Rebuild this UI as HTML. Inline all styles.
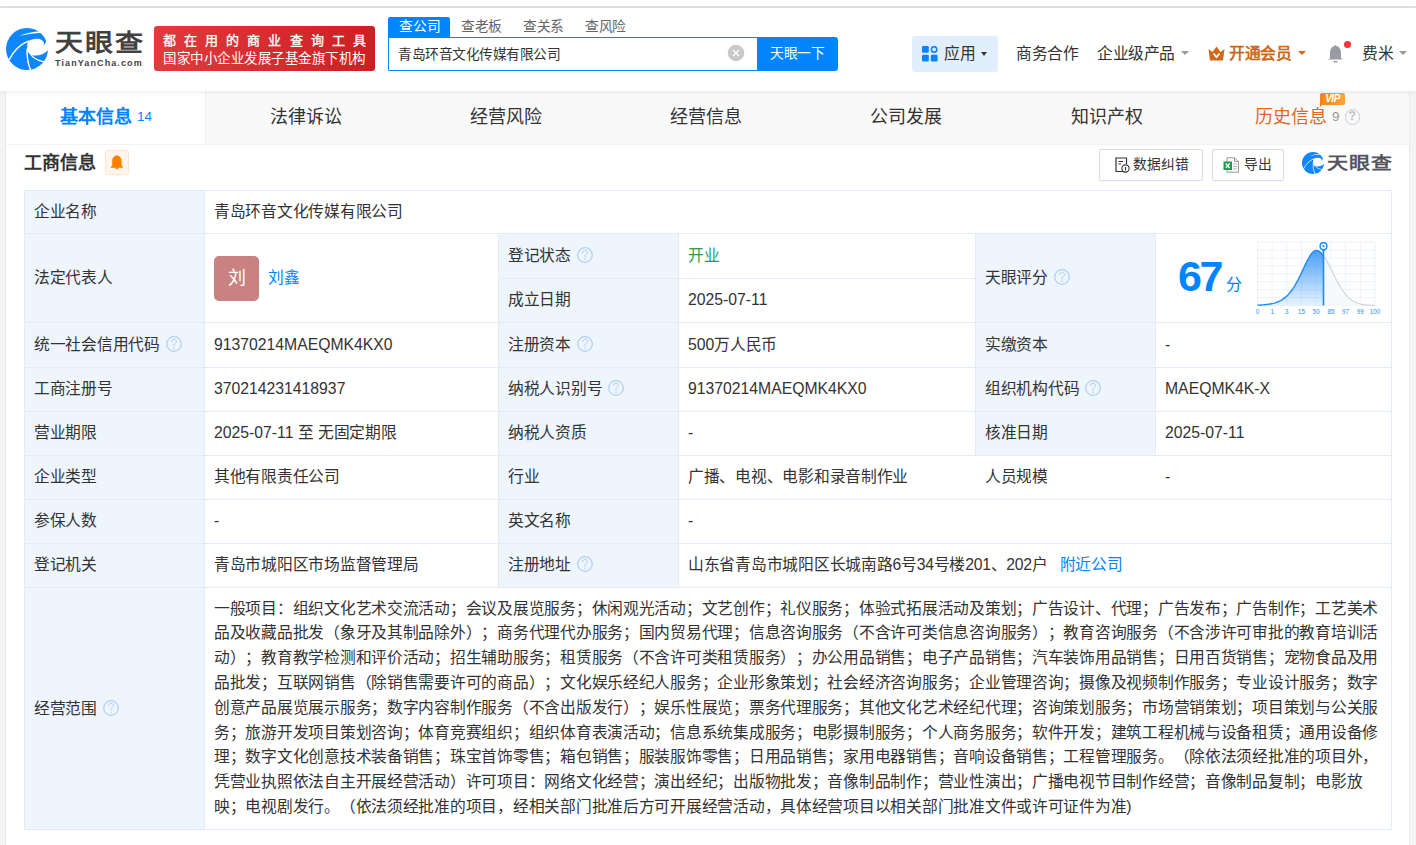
<!DOCTYPE html>
<html lang="zh-CN">
<head>
<meta charset="utf-8">
<style>
html,body{margin:0;padding:0;}
body{text-spacing-trim:space-all;width:1416px;height:845px;overflow:hidden;position:relative;background:#fff;font-family:"Liberation Sans",sans-serif;color:#333;}
.a{position:absolute;}
.t{position:absolute;white-space:nowrap;font-size:15.75px;line-height:20px;color:#333;letter-spacing:-0.27px;text-spacing-trim:space-all;}
.n{letter-spacing:0}
.lbl{position:absolute;background:#eef5fd;}
.hl{position:absolute;height:1px;background:#e3ecf6;}
.vl{position:absolute;width:1px;background:#e3ecf6;}
.q{position:absolute;box-sizing:border-box;width:16px;height:16px;margin-top:-1px;border:1.2px solid #a3c7ec;border-radius:50%;color:#94bfea;font-size:13px;line-height:14px;text-align:center;}
</style>
</head>
<body>
<div class="a" style="left:0;top:6px;width:1416px;height:2px;background:#e2e2e2"></div>
<div class="a" style="left:0;top:91px;width:6px;height:754px;background:#f4f4f4"></div>
<div class="a" style="left:5px;top:91px;width:1px;height:754px;background:#e9e9e9"></div>
<div class="a" style="left:1410px;top:91px;width:6px;height:754px;background:#f4f4f4"></div>
<div class="a" style="left:1409px;top:91px;width:1px;height:754px;background:#ececec"></div>
<div class="a" style="left:6px;top:91px;width:1403px;height:53px;background:#f9f9f9"></div>
<div class="a" style="left:6px;top:91px;width:199px;height:53px;background:#fff"></div>
<div class="a" style="left:205px;top:91px;width:1px;height:53px;background:#efefef"></div>
<div class="a" style="left:6px;top:144px;width:1403px;height:1px;background:#f3f3f3"></div>
<div class="a" style="left:0;top:8px;width:1416px;height:83px;background:#fff;box-shadow:0 1px 5px rgba(0,0,0,0.08)"></div>
<svg class="a" style="left:6px;top:28px" width="42" height="42" viewBox="0 0 42 42">
<circle cx="21" cy="21" r="21" fill="#0d86fe"/>
<path d="M22 13.2 C26 10.6 32.5 9.8 36 12.2 C38.3 13.8 38.6 16.2 37.2 17.5 L44 19 L44 20 C40 25.5 33 28.6 26.5 27.3 C23 26.5 21.2 23.5 21.2 20 C21.2 17 21.4 14.8 22 13.2 Z" fill="#fff"/>
<path d="M3.2 31.8 Q9.5 18.5 22.6 12.9" stroke="#fff" stroke-width="1.5" fill="none"/>
<path d="M21.3 20.5 Q20.2 32 24.8 42.5" stroke="#fff" stroke-width="1.5" fill="none"/>
<path d="M24.5 26.4 Q29.5 32.5 38.5 33.8" stroke="#fff" stroke-width="1.2" fill="none"/>
<path d="M13.6 7.8 Q23 3.8 34.5 3.3 L36 4.8 Q25 5.4 13.6 7.8 Z" fill="#fff"/>
<path d="M32.5 3.2 Q39.5 6.5 40 12.5 Q40 16 36.8 17.9 L44 19.8 L44 -1 L32.5 -1 Z" fill="#fff"/>
</svg>
<div class="a" style="left:54.5px;top:29px;font-size:28px;line-height:32px;font-weight:bold;color:#463f3f;letter-spacing:2.2px;white-space:nowrap;transform:scaleY(0.86);transform-origin:0 0">天眼查</div>
<div class="a" style="left:55px;top:58px;font-size:9px;line-height:10px;font-weight:bold;color:#463f3f;letter-spacing:1.1px;white-space:nowrap">TianYanCha.com</div>
<div class="a" style="left:154px;top:26px;width:221px;height:45px;border-radius:3px;background:linear-gradient(90deg,#e23a3d,#cc1f24)"></div>
<div class="a" style="left:163px;top:32px;font-size:13px;line-height:17px;color:#fff;letter-spacing:8.1px;white-space:nowrap;-webkit-text-stroke:0.35px #fff">都在用的商业查询工具</div>
<div class="a" style="left:163px;top:50px;font-size:13.5px;line-height:17px;color:#fff;letter-spacing:0.5px;white-space:nowrap">国家中小企业发展子基金旗下机构</div>
<div class="a" style="left:388px;top:17px;width:62px;height:21px;background:#0084ff;border-radius:2px 2px 0 0"></div>
<div class="a" style="left:399px;top:17px;font-size:13.75px;line-height:20px;color:#fff;white-space:nowrap">查公司</div>
<div class="a" style="left:461px;top:17px;font-size:13.75px;line-height:20px;color:#666;letter-spacing:-0.4px;white-space:nowrap">查老板</div>
<div class="a" style="left:523px;top:17px;font-size:13.75px;line-height:20px;color:#666;letter-spacing:-0.4px;white-space:nowrap">查关系</div>
<div class="a" style="left:585px;top:17px;font-size:13.75px;line-height:20px;color:#666;letter-spacing:-0.4px;white-space:nowrap">查风险</div>
<div class="a" style="left:388px;top:37px;width:369px;height:34px;box-sizing:border-box;border:1px solid #0084ff;border-right:none;border-radius:0 0 0 2px;background:#fff"></div>
<div class="a" style="left:398px;top:44.5px;font-size:13.75px;line-height:20px;color:#333;letter-spacing:-0.5px;white-space:nowrap">青岛环音文化传媒有限公司</div>
<svg class="a" style="left:727px;top:44px" width="18" height="18" viewBox="0 0 18 18"><circle cx="9" cy="9" r="8.3" fill="#c9c9c9"/><path d="M6 6 L12 12 M12 6 L6 12" stroke="#fff" stroke-width="1.3"/></svg>
<div class="a" style="left:757px;top:37px;width:81px;height:34px;background:#0084ff;border-radius:0 3px 3px 0"></div>
<div class="a" style="left:770px;top:44px;font-size:13.75px;line-height:20px;color:#fff;letter-spacing:-0.4px;white-space:nowrap">天眼一下</div>
<div class="a" style="left:912px;top:36px;width:86px;height:36px;background:#e1eefc;border-radius:3px"></div>
<svg class="a" style="left:922px;top:46px" width="16" height="16" viewBox="0 0 16 16"><rect x="0" y="0" width="6.8" height="6.8" rx="1.3" fill="#0a84fa"/><circle cx="12.1" cy="3.4" r="2.7" fill="none" stroke="#0a84fa" stroke-width="1.6"/><rect x="0" y="8.8" width="6.8" height="6.8" rx="1.3" fill="#0a84fa"/><rect x="8.8" y="8.8" width="6.8" height="6.8" rx="1.3" fill="#0a84fa"/></svg>
<div class="a" style="left:944px;top:44px;font-size:15.75px;line-height:20px;white-space:nowrap;letter-spacing:-0.5px;color:#333">应用</div>
<div class="a" style="left:981px;top:52px;width:0;height:0;border-left:3.75px solid transparent;border-right:3.75px solid transparent;border-top:4.5px solid #333"></div>
<div class="a" style="left:1016px;top:44px;font-size:15.75px;line-height:20px;white-space:nowrap;letter-spacing:-0.5px;color:#333">商务合作</div>
<div class="a" style="left:1097px;top:44px;font-size:15.75px;line-height:20px;white-space:nowrap;letter-spacing:-0.5px;color:#333">企业级产品</div>
<div class="a" style="left:1181px;top:51px;width:0;height:0;border-left:4.0px solid transparent;border-right:4.0px solid transparent;border-top:4.5px solid #999"></div>
<svg class="a" style="left:1208px;top:45.5px" width="17" height="15" viewBox="0 0 17 15"><path d="M0.5 3 L4.5 6 L8.5 0.5 L12.5 6 L16.5 3 L15 14.5 L2 14.5 Z" fill="#d2691a"/><path d="M5.5 7.5 L8.5 11 L11.5 7.5" stroke="#fff" stroke-width="1.8" fill="none"/></svg>
<div class="a" style="left:1229px;top:44px;font-size:15.75px;line-height:20px;white-space:nowrap;letter-spacing:-0.5px;color:#cc6a1a;font-weight:bold">开通会员</div>
<div class="a" style="left:1298px;top:51px;width:0;height:0;border-left:4.0px solid transparent;border-right:4.0px solid transparent;border-top:4.5px solid #d2691a"></div>
<svg class="a" style="left:1327px;top:45px" width="17" height="18" viewBox="0 0 17 18"><path d="M8.5 1 C4.5 1 3 4.5 3 8 L3 13 L1 14.5 L16 14.5 L14 13 L14 8 C14 4.5 12.5 1 8.5 1 Z" fill="#999da3"/><rect x="6.5" y="16" width="4" height="1.5" fill="#999da3"/><rect x="7.8" y="0" width="1.4" height="2" fill="#999da3"/></svg>
<div class="a" style="left:1344px;top:41px;width:7px;height:7px;border-radius:50%;background:#f4333c"></div>
<div class="a" style="left:1362px;top:44px;font-size:15.75px;line-height:20px;white-space:nowrap;letter-spacing:-0.5px;color:#333">费米</div>
<div class="a" style="left:1399px;top:51px;width:0;height:0;border-left:4.0px solid transparent;border-right:4.0px solid transparent;border-top:4.5px solid #999"></div>
<div class="a" style="left:60px;top:105px;font-size:18px;line-height:24px;white-space:nowrap;color:#0084ff;font-weight:bold">基本信息</div>
<div class="a" style="left:137px;top:108px;font-size:13.5px;line-height:18px;color:#0084ff">14</div>
<div class="a" style="left:270px;top:105px;font-size:18px;line-height:24px;white-space:nowrap;color:#333">法律诉讼</div>
<div class="a" style="left:470px;top:105px;font-size:18px;line-height:24px;white-space:nowrap;color:#333">经营风险</div>
<div class="a" style="left:670px;top:105px;font-size:18px;line-height:24px;white-space:nowrap;color:#333">经营信息</div>
<div class="a" style="left:870px;top:105px;font-size:18px;line-height:24px;white-space:nowrap;color:#333">公司发展</div>
<div class="a" style="left:1071px;top:105px;font-size:18px;line-height:24px;white-space:nowrap;color:#333">知识产权</div>
<div class="a" style="left:1255px;top:105px;font-size:18px;line-height:24px;white-space:nowrap;color:#e0691d">历史信息</div>
<div class="a" style="left:1332px;top:108px;font-size:13.5px;line-height:18px;color:#999">9</div>
<div class="a" style="left:1344.5px;top:109px;box-sizing:border-box;width:15.5px;height:15.5px;border:1.3px solid #c6ccd3;border-radius:50%;color:#b9c0c7;font-size:12px;line-height:13px;text-align:center;font-weight:bold">?</div>
<div class="a" style="left:1320px;top:93px;width:25px;height:12px;background:linear-gradient(90deg,#ef8519,#fda63d);border-radius:2px 2px 2px 0;color:#fff;font-size:10px;line-height:12px;font-weight:bold;font-style:italic;text-align:center;letter-spacing:-0.5px">VIP</div>
<div class="a" style="left:1320px;top:104px;width:0;height:0;border-top:3px solid #ef8519;border-right:3px solid transparent"></div>
<div class="a" style="left:24px;top:150.5px;font-size:18px;line-height:24px;font-weight:bold;color:#333;white-space:nowrap">工商信息</div>
<div class="a" style="left:105px;top:150px;width:24px;height:25px;box-sizing:border-box;border:1px solid #ffe3cc;border-radius:3px;background:#fff5ec"></div>
<svg class="a" style="left:110px;top:155px" width="14" height="16" viewBox="0 0 14 16"><path d="M6.9 0.3 C9.9 0.7 11.6 3 11.6 6 L11.6 10.6 L12.9 11.8 L12.9 12.7 L8.6 12.7 Q8.1 14.3 6.9 14.3 Q5.7 14.3 5.2 12.7 L0.9 12.7 L0.9 11.8 L2.2 10.6 L2.2 6 C2.2 3 3.9 0.7 6.9 0.3 Z" fill="#ff8000"/></svg>
<div class="a" style="left:1099px;top:149px;width:104px;height:32px;box-sizing:border-box;border:1px solid #dcdcdc;border-radius:2px;background:#fff"></div>
<svg class="a" style="left:1115px;top:157px" width="15" height="16" viewBox="0 0 15 16"><path d="M8.5 14.5 L1 14.5 L1 1 L11.5 1 L11.5 7" stroke="#333" stroke-width="1.2" fill="none"/><path d="M3.5 4.5 L8 4.5 M3.5 7 L6 7" stroke="#333" stroke-width="1.1"/><circle cx="10.5" cy="11.5" r="3.6" stroke="#333" stroke-width="1.1" fill="#fff"/><path d="M10.5 10 L10.5 13.5" stroke="#333" stroke-width="1.1"/></svg>
<div class="a" style="left:1133px;top:155px;font-size:13.75px;line-height:20px;color:#333;white-space:nowrap">数据纠错</div>
<div class="a" style="left:1212px;top:149px;width:72px;height:32px;box-sizing:border-box;border:1px solid #dcdcdc;border-radius:2px;background:#fff"></div>
<svg class="a" style="left:1223px;top:157px" width="17" height="16" viewBox="0 0 17 16"><path d="M4 0.8 L11.5 0.8 L15.5 4.5 L15.5 15.2 L4 15.2 Z" fill="#fff" stroke="#999" stroke-width="1"/><path d="M11.5 0.8 L11.5 4.5 L15.5 4.5" fill="none" stroke="#999" stroke-width="1"/><path d="M10 7 L14 7 M10 9.5 L14 9.5 M10 12 L14 12" stroke="#aaa" stroke-width="0.9"/><rect x="0.5" y="4.5" width="8.5" height="8.5" fill="#1e9b4f"/><path d="M2.8 6.5 L6.7 11 M6.7 6.5 L2.8 11" stroke="#fff" stroke-width="1.3"/></svg>
<div class="a" style="left:1244px;top:155px;font-size:13.75px;line-height:20px;color:#333;white-space:nowrap">导出</div>
<svg class="a" style="left:1302px;top:151.5px" width="22" height="22" viewBox="0 0 42 42">
<circle cx="21" cy="21" r="21" fill="#0d86fe"/>
<path d="M22 13.2 C26 10.6 32.5 9.8 36 12.2 C38.3 13.8 38.6 16.2 37.2 17.5 L44 19 L44 20 C40 25.5 33 28.6 26.5 27.3 C23 26.5 21.2 23.5 21.2 20 C21.2 17 21.4 14.8 22 13.2 Z" fill="#fff"/>
<path d="M3.2 31.8 Q9.5 18.5 22.6 12.9" stroke="#fff" stroke-width="1.5" fill="none"/>
<path d="M21.3 20.5 Q20.2 32 24.8 42.5" stroke="#fff" stroke-width="1.5" fill="none"/>
<path d="M24.5 26.4 Q29.5 32.5 38.5 33.8" stroke="#fff" stroke-width="1.2" fill="none"/>
<path d="M13.6 7.8 Q23 3.8 34.5 3.3 L36 4.8 Q25 5.4 13.6 7.8 Z" fill="#fff"/>
<path d="M32.5 3.2 Q39.5 6.5 40 12.5 Q40 16 36.8 17.9 L44 19.8 L44 -1 L32.5 -1 Z" fill="#fff"/>
</svg>
<div class="a" style="left:1327px;top:153px;font-size:21px;line-height:26px;font-weight:bold;color:#55555c;letter-spacing:1.2px;white-space:nowrap;transform:scaleY(0.82);transform-origin:0 0">天眼查</div>
<div class="lbl" style="left:24px;top:190px;width:180px;height:639px"></div>
<div class="lbl" style="left:498px;top:233px;width:180px;height:354px"></div>
<div class="lbl" style="left:975px;top:233px;width:180px;height:222px"></div>
<div class="hl" style="left:24px;top:190px;width:1368px"></div>
<div class="hl" style="left:24px;top:233px;width:1368px"></div>
<div class="hl" style="left:498px;top:278px;width:478px"></div>
<div class="hl" style="left:24px;top:322px;width:1368px"></div>
<div class="hl" style="left:24px;top:367px;width:1368px"></div>
<div class="hl" style="left:24px;top:411px;width:1368px"></div>
<div class="hl" style="left:24px;top:455px;width:1368px"></div>
<div class="hl" style="left:24px;top:499px;width:1368px"></div>
<div class="hl" style="left:24px;top:543px;width:1368px"></div>
<div class="hl" style="left:24px;top:587px;width:1368px"></div>
<div class="hl" style="left:24px;top:829px;width:1368px"></div>
<div class="vl" style="left:24px;top:190px;height:640px"></div>
<div class="vl" style="left:1391px;top:190px;height:640px"></div>
<div class="vl" style="left:204px;top:190px;height:640px"></div>
<div class="vl" style="left:498px;top:233px;height:355px"></div>
<div class="vl" style="left:678px;top:233px;height:355px"></div>
<div class="vl" style="left:975px;top:233px;height:223px"></div>
<div class="vl" style="left:1155px;top:233px;height:223px"></div>
<div class="t" style="left:34px;top:201.5px;color:#333;">企业名称</div>
<div class="t" style="left:214px;top:201.5px;color:#333;">青岛环音文化传媒有限公司</div>
<div class="t" style="left:34px;top:267.5px;color:#333;">法定代表人</div>
<div class="a" style="left:214px;top:256px;width:45px;height:45px;border-radius:5px;background:#c98181;color:#fff;font-size:18px;line-height:45px;text-align:center">刘</div>
<div class="t" style="left:268px;top:267.5px;color:#0084ff;">刘鑫</div>
<div class="t" style="left:508px;top:245.5px;color:#333;">登记状态</div>
<svg class="a" style="left:577px;top:246.5px" width="16" height="16" viewBox="0 0 16 16"><circle cx="8" cy="8" r="7.3" fill="none" stroke="#afd0f0" stroke-width="1.25"/><path d="M5.5 6 C5.5 4.3 6.6 3.3 8 3.3 C9.5 3.3 10.5 4.3 10.5 5.6 C10.5 7.1 8.8 7.4 8 8.6 L8 10.3" fill="none" stroke="#a9ccee" stroke-width="0.95"/><circle cx="8" cy="12.2" r="0.75" fill="#a9ccee"/></svg>
<div class="t" style="left:688px;top:245.5px;color:#1f9e4c;">开业</div>
<div class="t" style="left:508px;top:290px;color:#333;">成立日期</div>
<div class="t" style="left:688px;top:290px;color:#333;"><span class="n">2025-07-11</span></div>
<div class="t" style="left:985px;top:267.5px;color:#333;">天眼评分</div>
<svg class="a" style="left:1054px;top:268.5px" width="16" height="16" viewBox="0 0 16 16"><circle cx="8" cy="8" r="7.3" fill="none" stroke="#afd0f0" stroke-width="1.25"/><path d="M5.5 6 C5.5 4.3 6.6 3.3 8 3.3 C9.5 3.3 10.5 4.3 10.5 5.6 C10.5 7.1 8.8 7.4 8 8.6 L8 10.3" fill="none" stroke="#a9ccee" stroke-width="0.95"/><circle cx="8" cy="12.2" r="0.75" fill="#a9ccee"/></svg>
<div class="t" style="left:34px;top:334.5px;color:#333;">统一社会信用代码</div>
<svg class="a" style="left:166px;top:335.5px" width="16" height="16" viewBox="0 0 16 16"><circle cx="8" cy="8" r="7.3" fill="none" stroke="#afd0f0" stroke-width="1.25"/><path d="M5.5 6 C5.5 4.3 6.6 3.3 8 3.3 C9.5 3.3 10.5 4.3 10.5 5.6 C10.5 7.1 8.8 7.4 8 8.6 L8 10.3" fill="none" stroke="#a9ccee" stroke-width="0.95"/><circle cx="8" cy="12.2" r="0.75" fill="#a9ccee"/></svg>
<div class="t" style="left:214px;top:334.5px;color:#333;"><span class="n">91370214MAEQMK4KX0</span></div>
<div class="t" style="left:508px;top:334.5px;color:#333;">注册资本</div>
<svg class="a" style="left:577px;top:335.5px" width="16" height="16" viewBox="0 0 16 16"><circle cx="8" cy="8" r="7.3" fill="none" stroke="#afd0f0" stroke-width="1.25"/><path d="M5.5 6 C5.5 4.3 6.6 3.3 8 3.3 C9.5 3.3 10.5 4.3 10.5 5.6 C10.5 7.1 8.8 7.4 8 8.6 L8 10.3" fill="none" stroke="#a9ccee" stroke-width="0.95"/><circle cx="8" cy="12.2" r="0.75" fill="#a9ccee"/></svg>
<div class="t" style="left:688px;top:334.5px;color:#333;"><span class="n">500</span>万人民币</div>
<div class="t" style="left:985px;top:334.5px;color:#333;">实缴资本</div>
<div class="t" style="left:1165px;top:334.5px;color:#333;"><span class="n">-</span></div>
<div class="t" style="left:34px;top:379px;color:#333;">工商注册号</div>
<div class="t" style="left:214px;top:379px;color:#333;"><span class="n">370214231418937</span></div>
<div class="t" style="left:508px;top:379px;color:#333;">纳税人识别号</div>
<svg class="a" style="left:608px;top:380px" width="16" height="16" viewBox="0 0 16 16"><circle cx="8" cy="8" r="7.3" fill="none" stroke="#afd0f0" stroke-width="1.25"/><path d="M5.5 6 C5.5 4.3 6.6 3.3 8 3.3 C9.5 3.3 10.5 4.3 10.5 5.6 C10.5 7.1 8.8 7.4 8 8.6 L8 10.3" fill="none" stroke="#a9ccee" stroke-width="0.95"/><circle cx="8" cy="12.2" r="0.75" fill="#a9ccee"/></svg>
<div class="t" style="left:688px;top:379px;color:#333;"><span class="n">91370214MAEQMK4KX0</span></div>
<div class="t" style="left:985px;top:379px;color:#333;">组织机构代码</div>
<svg class="a" style="left:1085px;top:380px" width="16" height="16" viewBox="0 0 16 16"><circle cx="8" cy="8" r="7.3" fill="none" stroke="#afd0f0" stroke-width="1.25"/><path d="M5.5 6 C5.5 4.3 6.6 3.3 8 3.3 C9.5 3.3 10.5 4.3 10.5 5.6 C10.5 7.1 8.8 7.4 8 8.6 L8 10.3" fill="none" stroke="#a9ccee" stroke-width="0.95"/><circle cx="8" cy="12.2" r="0.75" fill="#a9ccee"/></svg>
<div class="t" style="left:1165px;top:379px;color:#333;"><span class="n">MAEQMK4K-X</span></div>
<div class="t" style="left:34px;top:423px;color:#333;">营业期限</div>
<div class="t" style="left:214px;top:423px;color:#333;"><span class="n">2025-07-11 </span>至<span class="n"> </span>无固定期限</div>
<div class="t" style="left:508px;top:423px;color:#333;">纳税人资质</div>
<div class="t" style="left:688px;top:423px;color:#333;"><span class="n">-</span></div>
<div class="t" style="left:985px;top:423px;color:#333;">核准日期</div>
<div class="t" style="left:1165px;top:423px;color:#333;"><span class="n">2025-07-11</span></div>
<div class="t" style="left:34px;top:467px;color:#333;">企业类型</div>
<div class="t" style="left:214px;top:467px;color:#333;">其他有限责任公司</div>
<div class="t" style="left:508px;top:467px;color:#333;">行业</div>
<div class="t" style="left:688px;top:467px;color:#333;">广播、电视、电影和录音制作业</div>
<div class="t" style="left:985px;top:467px;color:#333;">人员规模</div>
<div class="t" style="left:1165px;top:467px;color:#333;"><span class="n">-</span></div>
<div class="t" style="left:34px;top:511px;color:#333;">参保人数</div>
<div class="t" style="left:214px;top:511px;color:#333;"><span class="n">-</span></div>
<div class="t" style="left:508px;top:511px;color:#333;">英文名称</div>
<div class="t" style="left:688px;top:511px;color:#333;"><span class="n">-</span></div>
<div class="t" style="left:34px;top:555px;color:#333;">登记机关</div>
<div class="t" style="left:214px;top:555px;color:#333;">青岛市城阳区市场监督管理局</div>
<div class="t" style="left:508px;top:555px;color:#333;">注册地址</div>
<svg class="a" style="left:577px;top:556px" width="16" height="16" viewBox="0 0 16 16"><circle cx="8" cy="8" r="7.3" fill="none" stroke="#afd0f0" stroke-width="1.25"/><path d="M5.5 6 C5.5 4.3 6.6 3.3 8 3.3 C9.5 3.3 10.5 4.3 10.5 5.6 C10.5 7.1 8.8 7.4 8 8.6 L8 10.3" fill="none" stroke="#a9ccee" stroke-width="0.95"/><circle cx="8" cy="12.2" r="0.75" fill="#a9ccee"/></svg>
<div class="t" style="left:688px;top:555px;color:#333;">山东省青岛市城阳区长城南路6号34号楼201、202户 <span style="color:#0084ff;margin-left:8px">附近公司</span></div>
<div class="t" style="left:34px;top:698.8px;color:#333;">经营范围</div>
<svg class="a" style="left:102.5px;top:700px" width="16" height="16" viewBox="0 0 16 16"><circle cx="8" cy="8" r="7.3" fill="none" stroke="#afd0f0" stroke-width="1.25"/><path d="M5.5 6 C5.5 4.3 6.6 3.3 8 3.3 C9.5 3.3 10.5 4.3 10.5 5.6 C10.5 7.1 8.8 7.4 8 8.6 L8 10.3" fill="none" stroke="#a9ccee" stroke-width="0.95"/><circle cx="8" cy="12.2" r="0.75" fill="#a9ccee"/></svg>
<div class="t" style="left:214px;top:598.6px;color:#333;">一般项目：组织文化艺术交流活动；会议及展览服务；休闲观光活动；文艺创作；礼仪服务；体验式拓展活动及策划；广告设计、代理；广告发布；广告制作；工艺美术</div>
<div class="t" style="left:214px;top:623.4px;color:#333;">品及收藏品批发（象牙及其制品除外）；商务代理代办服务；国内贸易代理；信息咨询服务（不含许可类信息咨询服务）；教育咨询服务（不含涉许可审批的教育培训活</div>
<div class="t" style="left:214px;top:648.2px;color:#333;">动）；教育教学检测和评价活动；招生辅助服务；租赁服务（不含许可类租赁服务）；办公用品销售；电子产品销售；汽车装饰用品销售；日用百货销售；宠物食品及用</div>
<div class="t" style="left:214px;top:673.0px;color:#333;">品批发；互联网销售（除销售需要许可的商品）；文化娱乐经纪人服务；企业形象策划；社会经济咨询服务；企业管理咨询；摄像及视频制作服务；专业设计服务；数字</div>
<div class="t" style="left:214px;top:697.8000000000001px;color:#333;">创意产品展览展示服务；数字内容制作服务（不含出版发行）；娱乐性展览；票务代理服务；其他文化艺术经纪代理；咨询策划服务；市场营销策划；项目策划与公关服</div>
<div class="t" style="left:214px;top:722.6px;color:#333;">务；旅游开发项目策划咨询；体育竞赛组织；组织体育表演活动；信息系统集成服务；电影摄制服务；个人商务服务；软件开发；建筑工程机械与设备租赁；通用设备修</div>
<div class="t" style="left:214px;top:747.4000000000001px;color:#333;">理；数字文化创意技术装备销售；珠宝首饰零售；箱包销售；服装服饰零售；日用品销售；家用电器销售；音响设备销售；工程管理服务。（除依法须经批准的项目外，</div>
<div class="t" style="left:214px;top:772.2px;color:#333;">凭营业执照依法自主开展经营活动）许可项目：网络文化经营；演出经纪；出版物批发；音像制品制作；营业性演出；广播电视节目制作经营；音像制品复制；电影放</div>
<div class="t" style="left:214px;top:797.0px;color:#333;">映；电视剧发行。（依法须经批准的项目，经相关部门批准后方可开展经营活动，具体经营项目以相关部门批准文件或许可证件为准)</div>
<div class="a" style="left:1178px;top:250.5px;font-size:43px;line-height:50px;font-weight:bold;color:#0084ff;letter-spacing:-2.5px;white-space:nowrap">67</div>
<div class="a" style="left:1226px;top:274px;font-size:16px;line-height:22px;color:#0084ff;white-space:nowrap">分</div>
<svg class="a" style="left:1250px;top:236px" width="140" height="84" viewBox="0 0 140 84">
<defs><linearGradient id="gf" x1="0" y1="0" x2="0" y2="1"><stop offset="0" stop-color="#3f9bf7" stop-opacity="0.95"/><stop offset="1" stop-color="#3f9bf7" stop-opacity="0.12"/></linearGradient></defs>
<g stroke="#edf3f9" stroke-width="1"><line x1="7.50" y1="6.00" x2="7.50" y2="69.50"/><line x1="22.19" y1="6.00" x2="22.19" y2="69.50"/><line x1="36.88" y1="6.00" x2="36.88" y2="69.50"/><line x1="51.56" y1="6.00" x2="51.56" y2="69.50"/><line x1="66.25" y1="6.00" x2="66.25" y2="69.50"/><line x1="80.94" y1="6.00" x2="80.94" y2="69.50"/><line x1="95.62" y1="6.00" x2="95.62" y2="69.50"/><line x1="110.31" y1="6.00" x2="110.31" y2="69.50"/><line x1="125.00" y1="6.00" x2="125.00" y2="69.50"/><line x1="7.50" y1="6.00" x2="125.00" y2="6.00"/><line x1="7.50" y1="13.94" x2="125.00" y2="13.94"/><line x1="7.50" y1="21.88" x2="125.00" y2="21.88"/><line x1="7.50" y1="29.81" x2="125.00" y2="29.81"/><line x1="7.50" y1="37.75" x2="125.00" y2="37.75"/><line x1="7.50" y1="45.69" x2="125.00" y2="45.69"/><line x1="7.50" y1="53.62" x2="125.00" y2="53.62"/><line x1="7.50" y1="61.56" x2="125.00" y2="61.56"/><line x1="7.50" y1="69.50" x2="125.00" y2="69.50"/></g>
<path d="M73.50 69.50 L73.50 19.76 L74.08 20.58 L75.06 22.04 L76.04 23.63 L77.02 25.32 L78.00 27.10 L78.98 28.94 L79.96 30.85 L80.94 32.79 L81.92 34.76 L82.90 36.74 L83.88 38.71 L84.85 40.67 L85.83 42.60 L86.81 44.49 L87.79 46.32 L88.77 48.10 L89.75 49.81 L90.73 51.45 L91.71 53.01 L92.69 54.48 L93.67 55.88 L94.65 57.19 L95.62 58.41 L96.60 59.54 L97.58 60.59 L98.56 61.56 L99.54 62.45 L100.52 63.26 L101.50 63.99 L102.48 64.66 L103.46 65.26 L104.44 65.80 L105.42 66.28 L106.40 66.71 L107.38 67.09 L108.35 67.43 L109.33 67.72 L110.31 67.98 L111.29 68.21 L112.27 68.40 L113.25 68.57 L114.23 68.72 L115.21 68.84 L116.19 68.95 L117.17 69.04 L118.15 69.12 L119.12 69.19 L120.10 69.24 L121.08 69.29 L122.06 69.33 L123.04 69.36 L124.02 69.38 L125.00 69.41 L125.00 69.50 Z" fill="#f8f9fb"/>
<path d="M7.50 69.50 L7.50 69.18 L8.48 69.14 L9.46 69.09 L10.44 69.04 L11.42 68.98 L12.40 68.91 L13.38 68.83 L14.35 68.75 L15.33 68.65 L16.31 68.55 L17.29 68.43 L18.27 68.29 L19.25 68.14 L20.23 67.98 L21.21 67.79 L22.19 67.58 L23.17 67.35 L24.15 67.09 L25.12 66.80 L26.10 66.48 L27.08 66.13 L28.06 65.74 L29.04 65.30 L30.02 64.83 L31.00 64.30 L31.98 63.73 L32.96 63.09 L33.94 62.40 L34.92 61.64 L35.90 60.82 L36.88 59.92 L37.85 58.95 L38.83 57.90 L39.81 56.77 L40.79 55.55 L41.77 54.25 L42.75 52.86 L43.73 51.38 L44.71 49.81 L45.69 48.15 L46.67 46.41 L47.65 44.59 L48.62 42.70 L49.60 40.74 L50.58 38.73 L51.56 36.67 L52.54 34.59 L53.52 32.49 L54.50 30.40 L55.48 28.33 L56.46 26.31 L57.44 24.36 L58.42 22.51 L59.40 20.79 L60.38 19.22 L61.35 17.83 L62.33 16.65 L63.31 15.70 L64.29 15.02 L65.27 14.61 L66.25 14.50 L67.23 14.63 L68.21 14.95 L69.19 15.45 L70.17 16.15 L71.15 17.01 L72.12 18.05 L73.10 19.24 L73.50 19.76 L73.50 69.50 Z" fill="url(#gf)"/>
<path d="M73.50 19.76 L74.08 20.58 L75.06 22.04 L76.04 23.63 L77.02 25.32 L78.00 27.10 L78.98 28.94 L79.96 30.85 L80.94 32.79 L81.92 34.76 L82.90 36.74 L83.88 38.71 L84.85 40.67 L85.83 42.60 L86.81 44.49 L87.79 46.32 L88.77 48.10 L89.75 49.81 L90.73 51.45 L91.71 53.01 L92.69 54.48 L93.67 55.88 L94.65 57.19 L95.62 58.41 L96.60 59.54 L97.58 60.59 L98.56 61.56 L99.54 62.45 L100.52 63.26 L101.50 63.99 L102.48 64.66 L103.46 65.26 L104.44 65.80 L105.42 66.28 L106.40 66.71 L107.38 67.09 L108.35 67.43 L109.33 67.72 L110.31 67.98 L111.29 68.21 L112.27 68.40 L113.25 68.57 L114.23 68.72 L115.21 68.84 L116.19 68.95 L117.17 69.04 L118.15 69.12 L119.12 69.19 L120.10 69.24 L121.08 69.29 L122.06 69.33 L123.04 69.36 L124.02 69.38 L125.00 69.41" stroke="#cfd6de" stroke-width="1.2" fill="none"/>
<path d="M7.50 69.18 L8.48 69.14 L9.46 69.09 L10.44 69.04 L11.42 68.98 L12.40 68.91 L13.38 68.83 L14.35 68.75 L15.33 68.65 L16.31 68.55 L17.29 68.43 L18.27 68.29 L19.25 68.14 L20.23 67.98 L21.21 67.79 L22.19 67.58 L23.17 67.35 L24.15 67.09 L25.12 66.80 L26.10 66.48 L27.08 66.13 L28.06 65.74 L29.04 65.30 L30.02 64.83 L31.00 64.30 L31.98 63.73 L32.96 63.09 L33.94 62.40 L34.92 61.64 L35.90 60.82 L36.88 59.92 L37.85 58.95 L38.83 57.90 L39.81 56.77 L40.79 55.55 L41.77 54.25 L42.75 52.86 L43.73 51.38 L44.71 49.81 L45.69 48.15 L46.67 46.41 L47.65 44.59 L48.62 42.70 L49.60 40.74 L50.58 38.73 L51.56 36.67 L52.54 34.59 L53.52 32.49 L54.50 30.40 L55.48 28.33 L56.46 26.31 L57.44 24.36 L58.42 22.51 L59.40 20.79 L60.38 19.22 L61.35 17.83 L62.33 16.65 L63.31 15.70 L64.29 15.02 L65.27 14.61 L66.25 14.50 L67.23 14.63 L68.21 14.95 L69.19 15.45 L70.17 16.15 L71.15 17.01 L72.12 18.05 L73.10 19.24 L73.50 19.76" stroke="#1f8af2" stroke-width="1.4" fill="none"/>
<line x1="73.50" y1="12" x2="73.50" y2="69.50" stroke="#1f8af2" stroke-width="1.6"/>
<circle cx="73.50" cy="10.2" r="3.4" fill="#fff" stroke="#1f8af2" stroke-width="1.4"/>
<circle cx="73.50" cy="10.2" r="1.1" fill="#1f8af2"/>
<path d="M71.30 13.5 L73.50 16 L75.70 13.5 Z" fill="#1f8af2"/>
<g font-family="Liberation Sans, sans-serif" font-size="6.3" fill="#2f8ff0"><text x="7.50" y="77.8" text-anchor="middle">0</text><text x="22.19" y="77.8" text-anchor="middle">1</text><text x="36.88" y="77.8" text-anchor="middle">3</text><text x="51.56" y="77.8" text-anchor="middle">15</text><text x="66.25" y="77.8" text-anchor="middle">50</text><text x="80.94" y="77.8" text-anchor="middle">85</text><text x="95.62" y="77.8" text-anchor="middle">97</text><text x="110.31" y="77.8" text-anchor="middle">99</text><text x="125.00" y="77.8" text-anchor="middle">100</text></g>
</svg>
</body>
</html>
